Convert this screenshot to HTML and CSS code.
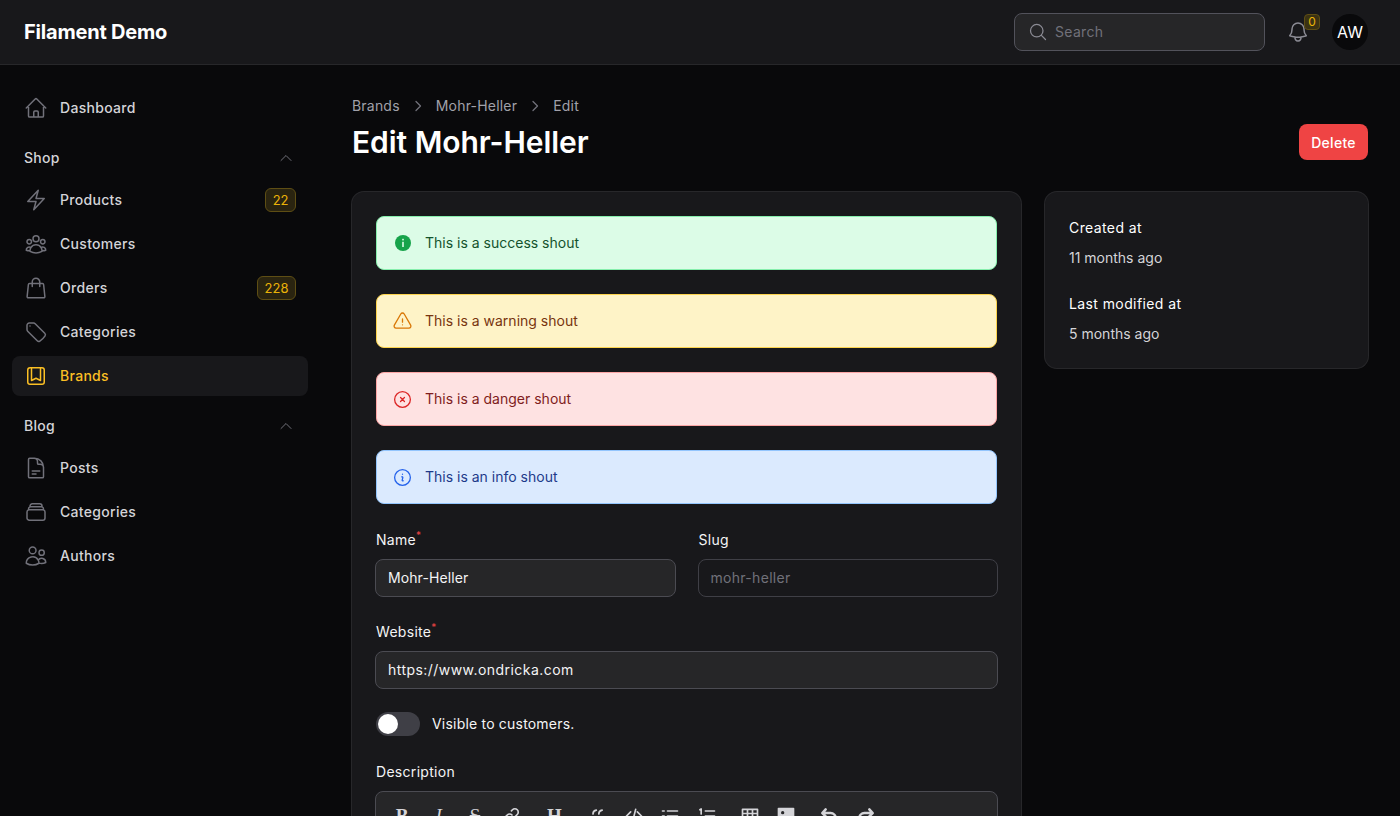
FILE: index.html
```html
<!DOCTYPE html>
<html>
<head>
  <meta charset="UTF-8">
  <title>Edit Mohr-Heller - Filament Demo</title>
  <link rel="stylesheet" href="styles.css">
</head>
<body>
  <svg class="sprite" xmlns="http://www.w3.org/2000/svg">
    <symbol id="i-home" viewBox="0 0 24 24"><path d="m2.25 12 8.954-8.955c.44-.439 1.152-.439 1.591 0L21.75 12M4.5 9.75v10.125c0 .621.504 1.125 1.125 1.125H9.75v-4.875c0-.621.504-1.125 1.125-1.125h2.25c.621 0 1.125.504 1.125 1.125V21h4.125c.621 0 1.125-.504 1.125-1.125V9.75M8.25 21h8.25"/></symbol>
    <symbol id="i-bolt" viewBox="0 0 24 24"><path d="m3.75 13.5 10.5-11.25L12 10.5h8.25L9.75 21.75 12 13.5H3.75Z"/></symbol>
    <symbol id="i-group" viewBox="0 0 24 24"><path d="M18 18.72a9.094 9.094 0 0 0 3.741-.479 3 3 0 0 0-4.682-2.72m.94 3.198.001.031c0 .225-.012.447-.037.666A11.944 11.944 0 0 1 12 21c-2.17 0-4.207-.576-5.963-1.584A6.062 6.062 0 0 1 6 18.719m12 0a5.971 5.971 0 0 0-.941-3.197m0 0A5.995 5.995 0 0 0 12 12.75a5.995 5.995 0 0 0-5.058 2.772m0 0a3 3 0 0 0-4.681 2.72 8.986 8.986 0 0 0 3.74.477m.94-3.197a5.971 5.971 0 0 0-.94 3.197M15 6.75a3 3 0 1 1-6 0 3 3 0 0 1 6 0Zm6 3a2.25 2.25 0 1 1-4.5 0 2.25 2.25 0 0 1 4.5 0Zm-13.5 0a2.25 2.25 0 1 1-4.5 0 2.25 2.25 0 0 1 4.5 0Z"/></symbol>
    <symbol id="i-bag" viewBox="0 0 24 24"><path d="M15.75 10.5V6a3.75 3.75 0 1 0-7.5 0v4.5m11.356-1.993 1.263 12c.07.665-.45 1.243-1.119 1.243H4.25a1.125 1.125 0 0 1-1.12-1.243l1.264-12A1.125 1.125 0 0 1 5.513 7.5h12.974c.576 0 1.059.435 1.119 1.007Z"/></symbol>
    <symbol id="i-tag" viewBox="0 0 24 24"><path d="M9.568 3H5.25A2.25 2.25 0 0 0 3 5.25v4.318c0 .597.237 1.17.659 1.591l9.581 9.581c.699.699 1.78.872 2.607.33a18.095 18.095 0 0 0 5.223-5.223c.542-.827.369-1.908-.33-2.607L11.16 3.66A2.25 2.25 0 0 0 9.568 3Z"/><path d="M6 6h.008v.008H6V6Z"/></symbol>
    <symbol id="i-bookmark" viewBox="0 0 24 24"><path d="M16.5 3.75V16.5L12 14.25 7.5 16.5V3.75m9 0H18A2.25 2.25 0 0 1 20.25 6v12A2.25 2.25 0 0 1 18 20.25H6A2.25 2.25 0 0 1 3.75 18V6A2.25 2.25 0 0 1 6 3.75h1.5m9 0h-9"/></symbol>
    <symbol id="i-doc" viewBox="0 0 24 24"><path d="M19.5 14.25v-2.625a3.375 3.375 0 0 0-3.375-3.375h-1.5A1.125 1.125 0 0 1 13.5 7.125v-1.5a3.375 3.375 0 0 0-3.375-3.375H8.25m0 12.75h7.5m-7.5 3H12M10.5 2.25H5.625c-.621 0-1.125.504-1.125 1.125v17.25c0 .621.504 1.125 1.125 1.125h12.75c.621 0 1.125-.504 1.125-1.125V11.25a9 9 0 0 0-9-9Z"/></symbol>
    <symbol id="i-stack" viewBox="0 0 24 24"><path d="M6 6.878V6a2.25 2.25 0 0 1 2.25-2.25h7.5A2.25 2.25 0 0 1 18 6v.878m-12 0c.235-.083.487-.128.75-.128h10.5c.263 0 .515.045.75.128m-12 0A2.25 2.25 0 0 0 4.5 9v.878m13.5-3A2.25 2.25 0 0 1 19.5 9v.878m0 0a2.246 2.246 0 0 0-.75-.128H5.25c-.263 0-.515.045-.75.128m15 0A2.25 2.25 0 0 1 21 12v6a2.25 2.25 0 0 1-2.25 2.25H5.25A2.25 2.25 0 0 1 3 18v-6c0-.98.626-1.813 1.5-2.122"/></symbol>
    <symbol id="i-users" viewBox="0 0 24 24"><path d="M15 19.128a9.38 9.38 0 0 0 2.625.372 9.337 9.337 0 0 0 4.121-.952 4.125 4.125 0 0 0-7.533-2.493M15 19.128v-.003c0-1.113-.285-2.16-.786-3.07M15 19.128v.106A12.318 12.318 0 0 1 8.624 21c-2.331 0-4.512-.645-6.374-1.766l-.001-.109a6.375 6.375 0 0 1 11.964-3.07M12 6.375a3.375 3.375 0 1 1-6.75 0 3.375 3.375 0 0 1 6.75 0Zm8.25 2.25a2.625 2.625 0 1 1-5.25 0 2.625 2.625 0 0 1 5.25 0Z"/></symbol>
    <symbol id="i-chevron" viewBox="0 0 24 24"><path d="m4.5 15.750 7.500-7.500 7.500 7.500"/></symbol>
  </svg>

  <header class="topbar">
    <div class="brand">Filament Demo</div>
    <div class="topbar-right">
      <div class="search">
        <svg class="search-icon" viewBox="0 0 24 24"><path d="m21 21-5.197-5.197m0 0A7.5 7.5 0 1 0 5.196 5.196a7.5 7.5 0 0 0 10.607 10.607Z"/></svg>
        <span>Search</span>
      </div>
      <div class="bell">
        <svg viewBox="0 0 24 24"><path d="M14.857 17.082a23.848 23.848 0 0 0 5.454-1.31A8.967 8.967 0 0 1 18 9.75V9A6 6 0 0 0 6 9v.75a8.967 8.967 0 0 1-2.312 6.022c1.733.64 3.56 1.085 5.455 1.31m5.714 0a24.255 24.255 0 0 1-5.714 0m5.714 0a3 3 0 1 1-5.714 0"/></svg>
        <span class="bell-count">0</span>
      </div>
      <div class="avatar">AW</div>
    </div>
  </header>

  <div class="layout">
    <nav class="sidebar">
      <a class="nav-item"><svg class="nav-icon"><use href="#i-home"/></svg><span>Dashboard</span></a>

      <div class="nav-group">
        <div class="group-label"><span>Shop</span><svg class="chevron"><use href="#i-chevron"/></svg></div>
        <div class="group-items">
          <a class="nav-item"><svg class="nav-icon"><use href="#i-bolt"/></svg><span>Products</span><em class="badge">22</em></a>
          <a class="nav-item"><svg class="nav-icon"><use href="#i-group"/></svg><span>Customers</span></a>
          <a class="nav-item"><svg class="nav-icon"><use href="#i-bag"/></svg><span>Orders</span><em class="badge">228</em></a>
          <a class="nav-item"><svg class="nav-icon"><use href="#i-tag"/></svg><span>Categories</span></a>
          <a class="nav-item active"><svg class="nav-icon"><use href="#i-bookmark"/></svg><span>Brands</span></a>
        </div>
      </div>

      <div class="nav-group">
        <div class="group-label"><span>Blog</span><svg class="chevron"><use href="#i-chevron"/></svg></div>
        <div class="group-items">
          <a class="nav-item"><svg class="nav-icon"><use href="#i-doc"/></svg><span>Posts</span></a>
          <a class="nav-item"><svg class="nav-icon"><use href="#i-stack"/></svg><span>Categories</span></a>
          <a class="nav-item"><svg class="nav-icon"><use href="#i-users"/></svg><span>Authors</span></a>
        </div>
      </div>
    </nav>

    <main class="main">
      <div class="crumbs">
        <span>Brands</span>
        <svg viewBox="0 0 20 20"><path d="m8 5.500 4.500 4.500-4.500 4.500"/></svg>
        <span>Mohr-Heller</span>
        <svg viewBox="0 0 20 20"><path d="m8 5.500 4.500 4.500-4.500 4.500"/></svg>
        <span>Edit</span>
      </div>
      <div class="page-head">
        <h1>Edit Mohr-Heller</h1>
        <button class="btn-danger">Delete</button>
      </div>

      <div class="columns">
        <section class="card form-card">
          <div class="shout success">
            <svg viewBox="0 0 16 16"><circle class="fill" cx="8" cy="8" r="8"/><rect class="cut" x="7.200" y="3.800" width="1.600" height="1.600"/><rect class="cut" x="7.200" y="6.800" width="1.600" height="5.200"/></svg>
            <span>This is a success shout</span>
          </div>
          <div class="shout warning">
            <svg viewBox="0 0 24 24"><path d="M12 9v3.75m-9.303 3.376c-.866 1.5.217 3.374 1.948 3.374h14.71c1.73 0 2.813-1.874 1.948-3.374L13.949 3.378c-.866-1.5-3.032-1.5-3.898 0L2.697 16.126ZM12 15.75h.007v.008H12v-.008Z"/></svg>
            <span>This is a warning shout</span>
          </div>
          <div class="shout danger">
            <svg viewBox="0 0 24 24"><path d="m9.75 9.75 4.5 4.5m0-4.5-4.5 4.5M21 12a9 9 0 1 1-18 0 9 9 0 0 1 18 0Z"/></svg>
            <span>This is a danger shout</span>
          </div>
          <div class="shout info">
            <svg viewBox="0 0 24 24"><path d="m11.25 11.25.041-.02a.75.75 0 0 1 1.063.852l-.708 2.836a.75.75 0 0 0 1.063.853l.041-.021M21 12a9 9 0 1 1-18 0 9 9 0 0 1 18 0Zm-9-3.75h.008v.008H12V8.25Z"/></svg>
            <span>This is an info shout</span>
          </div>

          <div class="field-row">
            <div class="field">
              <label>Name<sup>*</sup></label>
              <div class="input">Mohr-Heller</div>
            </div>
            <div class="field">
              <label>Slug</label>
              <div class="input disabled">mohr-heller</div>
            </div>
          </div>

          <div class="field">
            <label>Website<sup>*</sup></label>
            <div class="input url">https://www.ondricka.com</div>
          </div>

          <div class="toggle-row">
            <span class="toggle"><i></i></span>
            <span>Visible to customers.</span>
          </div>

          <div class="field">
            <label>Description</label>
            <div class="editor">
              <div class="toolbar">
                <div class="tool-group">
                  <span class="tool serif bold">B</span>
                  <span class="tool serif italic">I</span>
                  <span class="tool serif strike">S</span>
                  <span class="tool"><svg viewBox="0 0 24 24"><path d="M13.2 10.8a4 4 0 0 0-5.7 0l-3 3a4 4 0 0 0 5.700 5.700l1.300-1.300M10.800 13.200a4 4 0 0 0 5.700 0l3-3a4 4 0 0 0-5.700-5.700l-1.300 1.300"/></svg></span>
                </div>
                <div class="tool-group">
                  <span class="tool serif bold">H</span>
                </div>
                <div class="tool-group">
                  <span class="tool"><svg viewBox="0 0 24 24"><path d="M10 5c-2.500.5-4 2-4 4.500M17 5c-2.500.5-4 2-4 4.500"/></svg></span>
                  <span class="tool"><svg viewBox="0 0 24 24"><path d="m8 7-5 5 5 5M16 7l5 5-5 5M14 4l-4 16"/></svg></span>
                  <span class="tool"><svg viewBox="0 0 24 24"><path d="M9 6h12M9 12h12M9 18h12M3 6h2M3 12h2M3 18h2"/></svg></span>
                  <span class="tool"><svg viewBox="0 0 24 24"><path d="M10 6h11M10 12h11M10 18h11M3.500 4.500 5 3.500v6"/></svg></span>
                </div>
                <div class="tool-group">
                  <span class="tool"><svg viewBox="0 0 24 24"><path d="M3 4h18v16H3zM3 9h18M3 14.500h18M9 4v16M15 4v16"/></svg></span>
                  <span class="tool"><svg viewBox="0 0 24 24"><path class="solid" d="M3 3h18v18H3z"/><circle class="dot" cx="8" cy="8" r="2"/></svg></span>
                </div>
                <div class="tool-group">
                  <span class="tool"><svg class="thick" viewBox="0 0 24 24"><path d="M8 4 4 8.500l4 4M4.500 8.500H14a6 6 0 0 1 0 12h-3"/></svg></span>
                  <span class="tool"><svg class="thick" viewBox="0 0 24 24"><path d="m16 4 4 4.500-4 4M19.500 8.500H10a6 6 0 0 0 0 12h3"/></svg></span>
                </div>
              </div>
            </div>
          </div>
        </section>

        <aside class="card side-card">
          <div class="meta">
            <div class="meta-label">Created at</div>
            <div class="meta-value">11 months ago</div>
          </div>
          <div class="meta">
            <div class="meta-label">Last modified at</div>
            <div class="meta-value">5 months ago</div>
          </div>
        </aside>
      </div>
    </main>
  </div>
</body>
</html>
```

FILE: styles.css
```css
* { box-sizing: border-box; }
html, body { height: 100%; overflow: hidden; }
body { margin: 0; background: #09090b; color: #fff; font-family: Inter, "Liberation Sans", sans-serif; font-size: 14px; line-height: 20px; letter-spacing: .3px; }
svg { fill: none; stroke: currentColor; stroke-width: 1.5; stroke-linecap: round; stroke-linejoin: round; }
.sprite { display: none; }

/* topbar */
.topbar { height: 65px; background: #18181b; border-bottom: 1px solid #27272a; display: flex; align-items: center; justify-content: space-between; padding: 0 32px 0 24px; }
.brand { font-size: 20px; line-height: 28px; font-weight: 700; letter-spacing: -.2px; }
.topbar-right { display: flex; align-items: center; }
.search { width: 251px; height: 38px; display: flex; align-items: center; gap: 7px; padding: 0 13px; background: #262628; border: 1px solid #52525b; border-radius: 8px; color: #71717a; margin-right: 21px; }
.search-icon { width: 20px; height: 20px; color: #8b8b94; }
.bell { position: relative; width: 24px; height: 24px; color: #8b8b94; margin-right: 22px; }
.bell svg { width: 24px; height: 24px; display: block; }
.bell-count { position: absolute; left: 18px; top: -6px; width: 16px; height: 16px; display: flex; align-items: center; justify-content: center; font-size: 12px; color: #eab308; background: #3b3213; border: 1px solid #5e4e14; border-radius: 4px; letter-spacing: 0; }
.avatar { width: 36px; height: 36px; border-radius: 50%; background: #09090b; display: flex; align-items: center; justify-content: center; font-size: 16px; letter-spacing: 0; }

/* sidebar */
.layout { display: flex; }
.sidebar { width: 320px; flex: none; padding: 23px 12px 0; color: #d4d4d8; }
.nav-item { height: 40px; display: flex; align-items: center; gap: 12px; padding: 0 12px; border-radius: 8px; font-weight: 500; }
.nav-item span { flex: 1; }
.nav-icon { width: 24px; height: 24px; color: #71717a; flex: none; }
.nav-item.active { background: #18181b; color: #fbbf24; }
.nav-item.active .nav-icon { color: #fbbf24; }
.badge { font-style: normal; font-size: 13px; letter-spacing: 0; font-weight: 400; color: #eab308; background: #2a2410; border: 1px solid #5e4e14; border-radius: 6px; padding: 0 6.500px; height: 24px; line-height: 22px; flex: none; }
.nav-group { margin-top: 10px; }
.group-label { height: 40px; display: flex; align-items: center; justify-content: space-between; padding: 0 12px; font-weight: 500; margin-bottom: 2px; }
.chevron { width: 16px; height: 16px; color: #71717a; margin-right: 2px; }
.group-items { display: flex; flex-direction: column; gap: 4px; }

/* page */
.main { flex: 1; padding: 31px 32px 0; }
.crumbs { display: flex; align-items: center; gap: 8px; color: #a1a1aa; height: 20px; letter-spacing: .2px; }
.crumbs svg { width: 20px; height: 20px; color: #71717a; stroke-width: 1.3; }
.page-head { display: flex; align-items: center; justify-content: space-between; margin-top: 8px; height: 36px; }
h1 { margin: 0; font-size: 30px; line-height: 36px; font-weight: 600; letter-spacing: -.05px; }
.btn-danger { height: 36px; width: 69px; border: 0; border-radius: 8px; background: #ef4444; color: #fff; font: 500 14px Inter, "Liberation Sans", sans-serif; letter-spacing: .3px; }
.columns { display: flex; gap: 24px; margin-top: 32px; align-items: flex-start; }
.card { background: #18181b; border-radius: 12px; box-shadow: 0 0 0 1px #27272a; }
.form-card { width: 669px; padding: 24px; display: flex; flex-direction: column; gap: 24px; }
.side-card { flex: 1; padding: 24px; display: flex; flex-direction: column; gap: 24px; height: 176px; }
.meta-label { line-height: 24px; letter-spacing: .4px; }
.meta-value { color: #d4d4d8; margin-top: 8px; letter-spacing: 0; }

/* shouts */
.shout { height: 54px; display: flex; align-items: center; gap: 12px; padding: 0 16px 0 15px; border-radius: 8px; border: 1px solid; letter-spacing: 0; }
.shout svg { width: 21px; height: 21px; flex: none; }
.success { background: #dcfce7; border-color: #86efac; color: #14532d; }
.success svg { width: 16px; height: 16px; margin: 0 2.500px; }
.success .fill { fill: #16a34a; stroke: none; }
.success .cut { fill: #dcfce7; stroke: none; }
.warning { background: #fef3c7; border-color: #fcd34d; color: #78350f; }
.warning svg { color: #d97706; }
.danger { background: #fee2e2; border-color: #fca5a5; color: #7f1d1d; }
.danger svg { color: #dc2626; }
.info { background: #dbeafe; border-color: #93c5fd; color: #1e3a8a; }
.info svg { color: #2563eb; }

/* fields */
.field-row { display: grid; grid-template-columns: 1fr 1fr; gap: 24px; margin-top: 1px; }
.field label { display: block; line-height: 22px; margin-bottom: 8px; color: #f4f4f5; }
.field label sup { color: #ef4444; font-size: 10px; line-height: 0; }
.input { height: 38px; margin: 0 -1px; display: flex; align-items: center; padding: 0 12px; background: #262628; border: 1px solid #4b4b52; border-radius: 8px; color: #f4f4f5; letter-spacing: .1px; }
.input.url { letter-spacing: .45px; }
.input.disabled { background: transparent; border-color: #3f3f46; color: #71717a; letter-spacing: .3px; }
.toggle-row { display: flex; align-items: center; gap: 12px; color: #f4f4f5; margin: -1px 0 1px; letter-spacing: .2px; }
.toggle { width: 44px; height: 24px; padding: 2px; border-radius: 12px; background: #3f3f46; flex: none; }
.toggle i { display: block; width: 20px; height: 20px; border-radius: 50%; background: #fff; }

/* editor */
.editor { margin: 0 -1px; height: 200px; background: #262628; border: 1px solid #4b4b52; border-radius: 8px; }
.toolbar { display: flex; gap: 6.700px; padding: 14px 8px 0 8px; }
.tool-group { display: flex; }
.tool { width: 36.400px; height: 20px; display: flex; justify-content: center; color: #d4d4d8; font-size: 19px; line-height: 20px; }
.tool svg { width: 20px; height: 20px; stroke-width: 2; }
.tool svg.thick { stroke-width: 3; }
.tool .solid { fill: currentColor; }
.tool .dot { fill: #262628; stroke: none; }
.serif { font-family: "Liberation Serif", serif; letter-spacing: 0; }
.bold { font-weight: 700; }
.italic { font-style: italic; }
.strike { text-decoration: line-through; }
```
